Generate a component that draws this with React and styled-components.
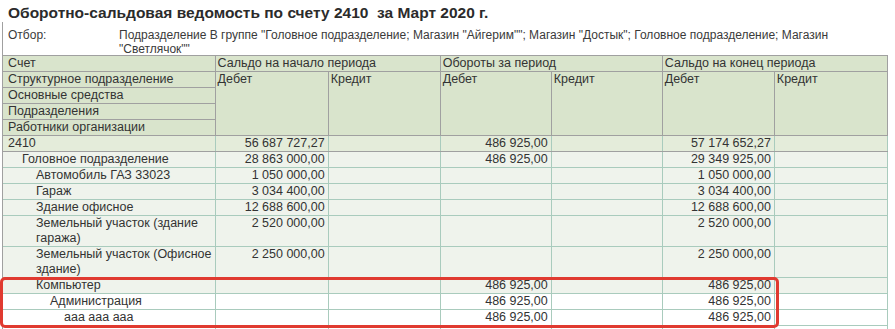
import React from "react";
import styled, { createGlobalStyle } from "styled-components";

const Global = createGlobalStyle`
  html, body { margin: 0; padding: 0; background: #ffffff; }
  body { font-family: "Liberation Sans", Arial, sans-serif; color: #333333; }
`;

const Page = styled.div`
  position: relative;
  width: 895px;
  height: 329px;
  overflow: hidden;
`;

const Title = styled.h1`
  margin: 0;
  padding: 4px 0 0 8px;
  height: 18px;
  font-size: 15.5px;
  line-height: 18px;
  font-weight: bold;
  color: #2b2b2b;
  white-space: pre;
`;

const Sheet = styled.div`
  margin-left: 2px;
  border-left: 1px solid #a0a0a0;
`;

const Filter = styled.div`
  display: grid;
  grid-template-columns: 111px 740px;
  padding: 6px 0 0 5px;
  height: 27px;
  font-size: 12px;
  line-height: 14px;
  color: #3a3a3a;
`;

const Table = styled.table`
  border-collapse: collapse;
  table-layout: fixed;
  width: 885px;
  font-size: 12.5px;
  line-height: 15px;
`;

const HeadCell = styled.th`
  background: #d9e4cc;
  border: 1px solid #a0a0a0;
  border-left: ${(p) => (p.$first ? "none" : "1px solid #a0a0a0")};
  font-weight: normal;
  text-align: left;
  vertical-align: top;
  padding: 0 3px 0 ${(p) => (p.$first ? 5 : 2)}px;
  color: #333333;
  white-space: nowrap;
  overflow: hidden;
`;

const Row = styled.tr`
  background: ${(p) => (p.$tone === "total" ? "#e4ecda" : p.$tone === "white" ? "#ffffff" : "#eff3ec")};
`;

const Cell = styled.td`
  border: 1px solid #a9cbbd;
  border-left: ${(p) => (p.$first ? "none" : "1px solid #a9cbbd")};
  border-bottom-color: ${(p) => (p.$total ? "#a0a0a0" : "#a9cbbd")};
  padding: 0 3px 0 ${(p) => 5 + (p.$level || 0) * 14}px;
  text-align: ${(p) => (p.$num ? "right" : "left")};
  vertical-align: top;
  color: #333333;
  white-space: ${(p) => (p.$num ? "nowrap" : "normal")};
`;

const Highlight = styled.div`
  position: absolute;
  left: 0;
  top: 277px;
  width: 773px;
  height: 45px;
  border: 3px solid #e03a30;
  border-radius: 5px;
  pointer-events: none;
`;

const rows = [
  { name: "2410", level: 0, tone: "total", v: ["56 687 727,27", "", "486 925,00", "", "57 174 652,27", ""] },
  { name: "Головное подразделение", level: 1, v: ["28 863 000,00", "", "486 925,00", "", "29 349 925,00", ""] },
  { name: "Автомобиль ГАЗ 33023", level: 2, v: ["1 050 000,00", "", "", "", "1 050 000,00", ""] },
  { name: "Гараж", level: 2, v: ["3 034 400,00", "", "", "", "3 034 400,00", ""] },
  { name: "Здание офисное", level: 2, v: ["12 688 600,00", "", "", "", "12 688 600,00", ""] },
  { name: "Земельный участок (здание гаража)", level: 2, v: ["2 520 000,00", "", "", "", "2 520 000,00", ""] },
  { name: "Земельный участок (Офисное здание)", level: 2, v: ["2 250 000,00", "", "", "", "2 250 000,00", ""] },
  { name: "Компьютер", level: 2, v: ["", "", "486 925,00", "", "486 925,00", ""] },
  { name: "Администрация", level: 3, tone: "white", v: ["", "", "486 925,00", "", "486 925,00", ""] },
  { name: "ааа ааа ааа", level: 4, tone: "white", v: ["", "", "486 925,00", "", "486 925,00", ""] },
  { name: "", level: 4, tone: "white", v: ["", "", "", "", "", ""] },
];

const widths = [212, 113, 112, 111, 111, 112, 113];

export default function App() {
  return (
    <Page>
      <Global />
      <Title>{"Оборотно-сальдовая ведомость по счету 2410  за Март 2020 г."}</Title>
      <Sheet>
        <Filter>
          <div>Отбор:</div>
          <div>
            Подразделение В группе "Головное подразделение; Магазин "Айгерим""; Магазин "Достык"; Головное подразделение; Магазин "Светлячок""
          </div>
        </Filter>
        <Table>
          <colgroup>
            {widths.map((w, i) => (
              <col key={i} style={{ width: w }} />
            ))}
          </colgroup>
          <thead>
            <tr>
              <HeadCell $first>Счет</HeadCell>
              <HeadCell colSpan={2}>Сальдо на начало периода</HeadCell>
              <HeadCell colSpan={2}>Обороты за период</HeadCell>
              <HeadCell colSpan={2}>Сальдо на конец периода</HeadCell>
            </tr>
            <tr>
              <HeadCell $first>Структурное подразделение</HeadCell>
              <HeadCell rowSpan={4}>Дебет</HeadCell>
              <HeadCell rowSpan={4}>Кредит</HeadCell>
              <HeadCell rowSpan={4}>Дебет</HeadCell>
              <HeadCell rowSpan={4}>Кредит</HeadCell>
              <HeadCell rowSpan={4}>Дебет</HeadCell>
              <HeadCell rowSpan={4}>Кредит</HeadCell>
            </tr>
            <tr>
              <HeadCell $first>Основные средства</HeadCell>
            </tr>
            <tr>
              <HeadCell $first>Подразделения</HeadCell>
            </tr>
            <tr>
              <HeadCell $first>Работники организации</HeadCell>
            </tr>
          </thead>
          <tbody>
            {rows.map((r, i) => (
              <Row key={i} $tone={r.tone}>
                <Cell $first $level={r.level} $total={r.tone === "total"}>
                  {r.name || "\u00a0"}
                </Cell>
                {r.v.map((val, j) => (
                  <Cell key={j} $num $total={r.tone === "total"}>
                    {val || "\u00a0"}
                  </Cell>
                ))}
              </Row>
            ))}
          </tbody>
        </Table>
      </Sheet>
      <Highlight />
    </Page>
  );
}
